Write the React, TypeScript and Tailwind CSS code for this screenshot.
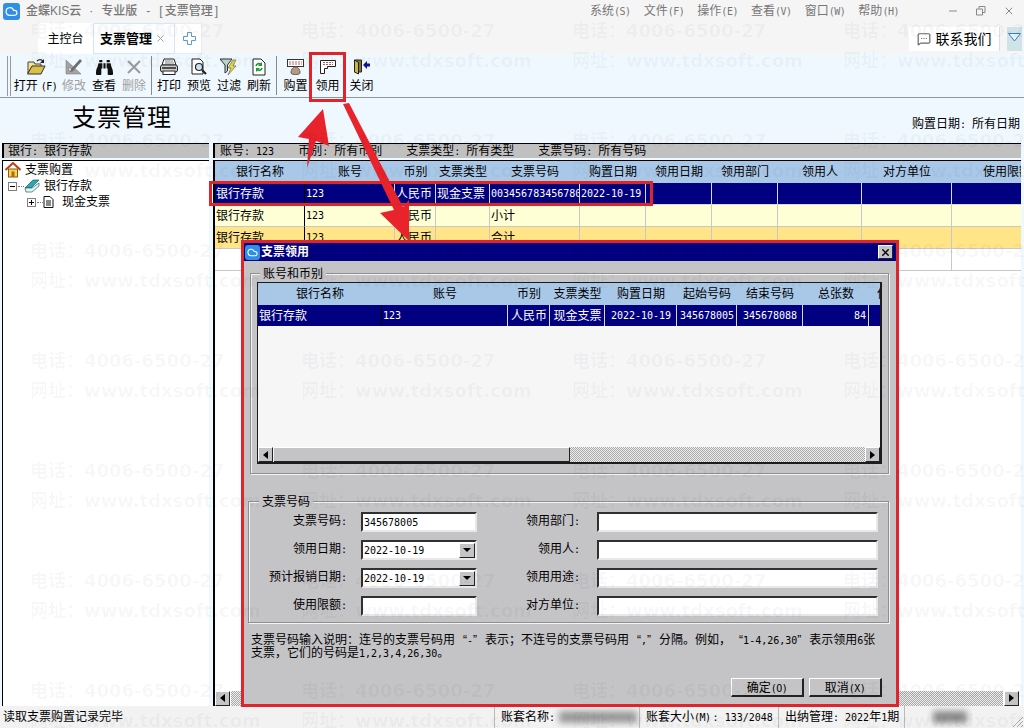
import { Cloud, MessageSquareMore, Minus, X } from 'lucide-react';
import { FaBinoculars } from 'react-icons/fa';
import type { ReactNode } from 'react';

const Num = ({ children }: { children: ReactNode }) => (
  <span className="font-['DejaVu_Sans_Mono',monospace] text-[10px]">{children}</span>
);

const Acc = ({ k }: { k: string }) => (
  <span className="font-['DejaVu_Sans_Mono',monospace] text-[10px] tracking-[-0.5px]">({k})</span>
);

// half width colon + space, like the old bitmap font
const Colon = () => <Num>:&nbsp;</Num>;

const QL = () => <span className="inline-block w-[12px] text-right">“</span>;
const QR = () => <span className="inline-block w-[12px] text-left">”</span>;

const AppIcon = ({ size }: { size: number }) => (
  <span className="flex shrink-0 items-center justify-center rounded-[3px] bg-[#2f8fe6]" style={{ width: size, height: size }}>
    <Cloud size={size - 4} color="#fff" strokeWidth={2.2} />
  </span>
);

const IconOpen = () => (
  <svg width="20" height="18" viewBox="0 0 20 18">
    <path d="M2 4h6l1 2h6v3H6L2 15z" fill="#f6e58a" stroke="#444" strokeWidth="1" />
    <path d="M6 8h13l-4 8H1.500z" fill="#d9c04a" stroke="#333" strokeWidth="1" />
    <path d="M11 3c2-2 4-2 6 0" fill="none" stroke="#222" strokeWidth="1.200" />
    <path d="M18 1v4h-4z" fill="#222" />
  </svg>
);
const IconEdit = () => (
  <svg width="20" height="18" viewBox="0 0 20 18">
    <path d="M2 2v14h15z M5 9v4h4z" fill="#a3a3a3" fillRule="evenodd" stroke="#7f7f7f" strokeWidth="0.600" />
    <path d="M7 11l9-10 2 2-9 10-3 1z" fill="#6e6e6e" />
  </svg>
);
const IconDelete = () => (
  <svg width="16" height="16" viewBox="0 0 16 16">
    <path d="M2 2l12 12M14 2L2 14" stroke="#9a9a9a" strokeWidth="2" />
  </svg>
);
const IconPrint = () => (
  <svg width="20" height="18" viewBox="0 0 20 18">
    <path d="M5 1h10l2 6H3z" fill="#fff" stroke="#222" />
    <path d="M6 3h8M6 5h9" stroke="#888" />
    <rect x="1.500" y="7" width="17" height="7" rx="2" fill="#cfcfcf" stroke="#222" />
    <rect x="4" y="13" width="12" height="3.500" fill="#fff" stroke="#222" />
    <path d="M3 10h14" stroke="#222" strokeWidth="1.500" />
  </svg>
);
const IconPreview = () => (
  <svg width="20" height="18" viewBox="0 0 20 18">
    <path d="M3 1h8l3 3v12H3z" fill="#fff" stroke="#222" />
    <circle cx="10" cy="9" r="3.500" fill="#cfe6f7" stroke="#222" strokeWidth="1.200" />
    <path d="M13 12l4 4" stroke="#222" strokeWidth="2.200" />
  </svg>
);
const IconFilter = () => (
  <svg width="20" height="18" viewBox="0 0 20 18">
    <path d="M1 1h12L8.500 7v6L6 15V7z" fill="#b7d4c8" stroke="#333" />
    <path d="M14 2l-5 8h3l-3 7 8-9h-3l3-6z" fill="#e9d83a" stroke="#555" strokeWidth="0.600" />
  </svg>
);
const IconRefresh = () => (
  <svg width="18" height="18" viewBox="0 0 18 18">
    <path d="M3 1h8l4 4v12H3z" fill="#fff" stroke="#222" />
    <path d="M6 8a3 3 0 0 1 5-1.500M12 10a3 3 0 0 1-5 1.500" fill="none" stroke="#1b9a2f" strokeWidth="1.600" />
    <path d="M12 4v4H8zM6 14v-4h4z" fill="#1b9a2f" />
  </svg>
);
const IconBuy = () => (
  <svg width="20" height="18" viewBox="0 0 20 18">
    <rect x="1.500" y="1.500" width="16" height="7" fill="#fff" stroke="#333" />
    <path d="M3 4h13M3 6h13" stroke="#c25a5a" strokeDasharray="2 1" />
    <path d="M5 15c0-4 2-6 4.500-6s4.500 2 4.500 6c0 2-9 2-9 0z" fill="#b49a86" stroke="#6b5a50" />
  </svg>
);
const IconTake = () => (
  <svg width="18" height="16" viewBox="0 0 18 16">
    <path d="M1.500 1.500h15v6h-8v2h-3v5h-4z" fill="#fff" stroke="#222" />
    <path d="M4 3.500h10M4 5.500h10" stroke="#b85c5c" strokeDasharray="2 1" />
  </svg>
);
const IconClose = () => (
  <svg width="18" height="16" viewBox="0 0 18 16">
    <path d="M1.500 1h7v12h-7z" fill="#8a7a2a" stroke="#222" />
    <path d="M1.500 1l4 2.500V15l-4-2z" fill="#c9b64a" stroke="#222" />
    <path d="M10 6l4-4v2.500h3v3h-3V10z" fill="#12129a" />
  </svg>
);

const IconHouse = () => (
  <svg width="16" height="16" viewBox="0 0 16 16">
    <rect x="3.500" y="7" width="9" height="8" fill="#f5d64a" stroke="#8a5a10" />
    <rect x="6.500" y="9.500" width="3" height="5.500" fill="#b5651d" />
    <path d="M0.500 8L8 1l7.500 7" fill="none" stroke="#b8431a" strokeWidth="2" />
  </svg>
);
const IconBank = () => (
  <svg width="16" height="14" viewBox="0 0 16 14">
    <path d="M1 9L9 1h6L7 9z" fill="#2fa7b0" stroke="#17616a" strokeWidth="0.700" />
    <path d="M1 9h7l7-5v3l-7 6H2z" fill="#e8f4f2" stroke="#17616a" strokeWidth="0.700" />
  </svg>
);
const IconPage = () => (
  <svg width="11" height="12" viewBox="0 0 11 12">
    <path d="M1 .5h6l3 3v8H1z" fill="#fff" stroke="#111" />
    <path d="M3 5h5M3 7h5M3 9h5" stroke="#111" />
  </svg>
);
const TreeBox = ({ open }: { open: boolean }) => (
  <span className="flex h-[9px] w-[9px] shrink-0 items-center justify-center border border-[#808080] bg-white">
    <span className="relative h-px w-[5px] bg-black">
      {!open && <span className="absolute left-[2px] top-[-2px] h-[5px] w-px bg-black" />}
    </span>
  </span>
);

const tools = [
  { label: <>打开<span className="ml-[3px]"><Acc k="F" /></span></>, icon: <IconOpen />, w: 'w-[47px]' },
  { label: '修改', icon: <IconEdit />, w: 'w-[30px]', off: true },
  { label: '查看', icon: <FaBinoculars size={17} color="#111" />, w: 'w-[30px]' },
  { label: '删除', icon: <IconDelete />, w: 'w-[30px]', off: true },
  { sep: true },
  { label: '打印', icon: <IconPrint />, w: 'w-[30px]' },
  { label: '预览', icon: <IconPreview />, w: 'w-[30px]' },
  { label: '过滤', icon: <IconFilter />, w: 'w-[30px]' },
  { label: '刷新', icon: <IconRefresh />, w: 'w-[30px]' },
  { sep: true },
  { label: '购置', icon: <IconBuy />, w: 'w-[33px]' },
  { label: '领用', icon: <IconTake />, w: 'w-[31px]' },
  { label: '关闭', icon: <IconClose />, w: 'w-[35px] ml-[1px]' },
];

const menus = [
  ['系统', 'S'],
  ['文件', 'F'],
  ['操作', 'E'],
  ['查看', 'V'],
  ['窗口', 'W'],
  ['帮助', 'H'],
];

const mainHead = ['银行名称', '账号', '币别', '支票类型', '支票号码', '购置日期', '领用日期', '领用部门', '领用人', '对方单位', '使用限额'];
const mainCols = 'grid grid-cols-[90px_90px_41px_54px_90px_66px_66px_66px_84px_90px_110px]';

const mainRows = [
  { bg: 'bg-[#000080] text-white', line: 'border-[#d8d8d8]', cells: ['银行存款', '123', '人民币', '现金支票', '003456783456780', '2022-10-19', '', '', '', '', ''] },
  { bg: 'bg-[#ffffd6]', line: 'border-[#c8c8c8]', cells: ['银行存款', '123', '人民币', '', '小计', '', '', '', '', '', ''] },
  { bg: 'bg-[#ffe488]', line: 'border-[#c8c8c8]', cells: ['银行存款', '123', '人民币', '', '合计', '', '', '', '', '', ''] },
  { bg: 'bg-white', line: 'border-[#c8c8c8]', cells: ['', '', '', '', '', '', '', '', '', '', ''] },
];

const isNum = (s: string) => /^[\d-]+$/.test(s);

const dlgHead = ['银行名称', '账号', '币别', '支票类型', '购置日期', '起始号码', '结束号码', '总张数', '使用'];
const dlgCols = 'grid grid-cols-[124px_126px_42px_55px_72px_60px_66px_66px_40px]';
const dlgRow = ['银行存款', '123', '人民币', '现金支票', '2022-10-19', '345678005', '345678088', '84', ''];

const dither = 'bg-[repeating-conic-gradient(#a8a8a8_0_25%,#eeeeee_0_50%)] bg-[length:2px_2px]';
const raised = 'border border-t-white border-l-white border-r-[#222] border-b-[#222] bg-[#c4c3c6]';
const sunken = 'border-2 border-t-[#303030] border-l-[#303030] border-r-[#e8e8e8] border-b-[#e8e8e8] bg-white';

const ScrollBtn = ({ right }: { right?: boolean }) => (
  <span className={`flex h-[15px] w-[15px] shrink-0 items-center justify-center ${raised}`}>
    <svg width="5" height="8" viewBox="0 0 5 8">
      <path d={right ? 'M0 0l5 4-5 4z' : 'M5 0L0 4l5 4z'} fill="#000" />
    </svg>
  </span>
);

const Field = ({ label, value, date }: { label: string; value?: string; date?: boolean }) => (
  <>
    <span className="h-[20px] overflow-hidden text-right leading-[18px]">{label}<Num>:</Num></span>
    <span className={`flex h-[20px] items-center pl-[1px] ${sunken}`}>
      {value && <Num>{value}</Num>}
      {date && (
        <span className={`ml-auto flex h-[15px] w-[16px] items-center justify-center ${raised}`}>
          <svg width="8" height="4" viewBox="0 0 8 4"><path d="M0 0h8L4 4z" fill="#000" /></svg>
        </span>
      )}
    </span>
  </>
);

const Group = ({ title, className, legend, children }: { title: string; className: string; legend: string; children: ReactNode }) => (
  <div className={`relative border border-[#8e8e8e] shadow-[inset_1px_1px_0_#f4f4f4,1px_1px_0_#f4f4f4] ${className}`}>
    <span className={`absolute top-[-8px] bg-[#c4c3c6] px-[3px] text-[12px] leading-[16px] ${legend}`}>{title}</span>
    {children}
  </div>
);

export default function App() {
  return (
    <div className="relative flex h-[728px] w-[1024px] flex-col overflow-hidden bg-[#f0f8ff] font-['Liberation_Sans','Noto_Sans_CJK_SC',sans-serif] text-[12px] text-black">
      {/* title bar */}
      <div className="flex h-[22px] shrink-0 items-center bg-[#f5f5f5] pl-[3px] text-[#777]">
        <AppIcon size={17} />
        <span className="ml-[6px] whitespace-nowrap font-medium">
          金蝶KIS云<span className="mx-[8px]">·</span>专业版<span className="mx-[9px]">-</span>[<span className="mx-[2px]">支票管理</span>]
        </span>
        <div className="ml-auto flex w-[322px]">
          {menus.map(([name, key]) => (
            <span key={key} className="w-[56px] whitespace-nowrap">{name}<Acc k={key} /></span>
          ))}
        </div>
        <div className="flex w-[112px] items-center gap-[16px] pl-[35px] text-[#888]">
          <Minus size={12} />
          <span className="flex w-[12px] justify-center">
            <svg width="10" height="10" viewBox="0 0 10 10"><path d="M3 2.500V.500h6v6H7M.500 3h6v6h-6z" fill="none" stroke="#888" /></svg>
          </span>
          <X size={12} />
        </div>
      </div>

      {/* tabs */}
      <div className="flex h-[32px] shrink-0 items-end bg-[#f5f5f5] pl-[38px]">
        <div className="flex h-[31px] w-[55px] items-center justify-center bg-white">主控台</div>
        <div className="flex h-[31px] w-[82px] items-center border border-[#d6e6f4] bg-[#fbfdff] pl-[6px] text-[13px] font-bold">
          支票管理
          <X size={11} className="ml-[3px] text-[#999]" />
        </div>
        <div className="flex h-[31px] w-[27px] items-center justify-center border border-l-0 border-[#e6eef5] bg-white pl-[3px]">
          <svg width="13" height="13" viewBox="0 0 13 13">
            <path d="M4.500.500h4v4h4v4h-4v4h-4v-4h-4v-4h4z" fill="#fff" stroke="#5b9bd5" />
          </svg>
        </div>
        <div className="ml-auto mb-[3px] flex h-[24px] w-[91px] items-center justify-center gap-[5px] border-r border-[#ddd] bg-white text-[14px]">
          <MessageSquareMore size={14} className="text-[#666]" />
          联系我们
        </div>
        <div className="mb-[3px] ml-[7px] mr-[2px] flex h-[24px] w-[15px] items-center justify-center bg-[#cfe3e8] pb-[4px]">
          <svg width="13" height="9" viewBox="0 0 13 9">
            <path d="M.500.500h12l-6 7.500z" fill="#e6f3f6" stroke="#3a7fb5" />
          </svg>
        </div>
      </div>

      {/* toolbar */}
      <div className="flex h-[44px] shrink-0 items-center border-b border-[#8f9499] pl-[7px]">
        <div className="mr-[1px] h-[40px] w-[4px] border-x border-[#999]" />
        {tools.map((t, i) =>
          t.sep ? (
            <div key={i} className="mx-[2px] h-[39px] w-px shrink-0 bg-[#8a8a8a]" />
          ) : (
            <div key={i} className={`flex shrink-0 flex-col items-center ${t.w} ${t.off ? 'text-[#a0a0a0]' : ''}`}>
              <span className="flex h-[20px] items-center">{t.icon}</span>
              <span className="mt-[1px] whitespace-nowrap leading-[16px]">{t.label}</span>
            </div>
          ),
        )}
      </div>

      {/* report heading */}
      <div className="flex h-[45px] shrink-0 items-start pl-[72px] pr-[4px]">
        <h1 className="mt-[3px] text-[24px] font-normal leading-[34px] tracking-[1px]">支票管理</h1>
        <span className="ml-auto mt-[18px] leading-[16px]">购置日期<Colon />所有日期</span>
      </div>

      {/* body */}
      <div className="flex min-h-0 flex-1 pl-[2px] pr-[3px]">
        <div className="flex w-[207px] shrink-0 flex-col">
          <div className="h-[15px] border-l-2 border-t border-black bg-[#c0c0c0] pl-[4px] leading-[14px]">银行<Colon />银行存款</div>
          <div className="mt-[2px] min-h-0 flex-1 border-l border-t border-black bg-white pt-[1px]">
            <div className="flex h-[16px] items-center gap-[4px] pl-[2px]"><IconHouse />支票购置</div>
            <div className="flex h-[16px] items-center pl-[5px]">
              <TreeBox open />
              <span className="ml-[1px] w-[6px] border-t border-dotted border-[#777]" />
              <IconBank />
              <span className="ml-[4px]">银行存款</span>
            </div>
            <div className="flex h-[16px] items-center pl-[24px]">
              <TreeBox open={false} />
              <span className="ml-[1px] w-[6px] border-t border-dotted border-[#777]" />
              <IconPage />
              <span className="ml-[8px]">现金支票</span>
            </div>
          </div>
        </div>

        <div className="ml-[4px] flex min-w-0 flex-1 flex-col">
          <div className="flex h-[15px] gap-[24px] border-l-2 border-t border-black bg-[#c0c0c0] pl-[5px] leading-[14px]">
            <span>账号<Colon /><Num>123</Num></span>
            <span>币别<Colon />所有币别</span>
            <span>支票类型<Colon />所有类型</span>
            <span>支票号码<Colon />所有号码</span>
          </div>
          <div className="mt-[2px] flex min-h-0 flex-1 flex-col overflow-hidden border-l-2 border-t border-black bg-white">
            <div className={`${mainCols} h-[22px] items-center bg-[#a9c8e8] text-center`}>
              {mainHead.map((h) => <span key={h}>{h}</span>)}
            </div>
            {mainRows.map((r, ri) => (
              <div key={ri} className={`${mainCols} h-[22px] ${r.bg}`}>
                {r.cells.map((c, ci) => (
                  <span
                    key={ci}
                    className={`flex items-center overflow-hidden whitespace-nowrap border-b pl-[1px] ${r.line} ${ci === 0 ? 'border-r border-r-black' : 'border-r'}`}
                  >
                    {isNum(c) ? <Num>{c}</Num> : c}
                  </span>
                ))}
              </div>
            ))}
            <div className="mt-auto flex h-[16px] shrink-0 items-center justify-between pr-[2px]">
              <ScrollBtn />
              <span className={`mx-[1px] h-[15px] flex-1 ${dither}`} />
              <ScrollBtn right />
            </div>
          </div>
        </div>
      </div>

      {/* status bar */}
      <div className="flex h-[22px] shrink-0 items-center bg-[#f2f2f2]">
        <span className="w-[494px] shrink-0 pl-[3px]">读取支票购置记录完毕</span>
        <span className="flex h-full w-[145px] shrink-0 items-center border-l border-[#bbb] pl-[6px]">
          账套名称<Num>:</Num>
          <span className="ml-[4px] h-[12px] w-[78px] bg-[#9a9a9a] blur-[3px]" />
        </span>
        <span className="flex h-full w-[139px] shrink-0 items-center whitespace-pre border-l border-[#bbb] pl-[6px]">
          账套大小<Acc k="M" /><span className="ml-[2px]"><Colon /></span><Num>133/2048</Num>
        </span>
        <span className="flex h-full w-[127px] shrink-0 items-center whitespace-pre border-x border-[#bbb] pl-[6px]">
          出纳管理<Colon /><Num>2022</Num>年<Num>1</Num>期
        </span>
        <span className="ml-[28px] h-[12px] w-[34px] bg-[#8a8a8a] blur-[3px]" />
        <svg className="ml-auto self-end" width="13" height="13" viewBox="0 0 13 13">
          <path d="M12 2L2 12M12 6l-6 6M12 10l-2 2" stroke="#a8a8a8" />
        </svg>
      </div>

      {/* annotation arrows */}
      <svg className="absolute left-0 top-0" width="1024" height="728" viewBox="0 0 1024 728">
        <path d="M323 109l6 37-13-5-9 27 2-29-11-2z" fill="#e8232b" />
        <path d="M343 104l6-1 54 104 6-7v41l-29-28 14-3z" fill="#e8232b" />
      </svg>
      <div className="absolute left-[309px] top-[52px] h-[50px] w-[37px] border-[3px] border-[#e0242c]" />
      <div className="absolute left-[209px] top-[181px] h-[25px] w-[444px] border-[3px] border-[#e0242c]" />

      {/* dialog */}
      <div className="absolute left-[241px] top-[240px] flex h-[467px] w-[658px] flex-col border-[3px] border-[#e0242c] bg-[#c4c3c6]">
        <div className="flex h-[18px] shrink-0 items-center bg-[#000080] pl-[1px] pr-[3px] font-bold text-white">
          <AppIcon size={15} />
          <span className="ml-[1px]">支票领用</span>
          <span className={`ml-auto flex h-[14px] w-[15px] items-center justify-center text-black ${raised}`}>
            <X size={11} strokeWidth={3} />
          </span>
        </div>

        <Group title="账号和币别" legend="left-[9px]" className="ml-[6px] mr-[7px] mt-[12px] h-[201px] px-[6px] pt-[8px]">
          <div className="flex h-[182px] flex-col overflow-hidden border border-b-2 border-r-2 border-[#1c1c1c] bg-[#f6f6f6]">
            <div className={`${dlgCols} h-[22px] shrink-0 items-center whitespace-nowrap bg-[#a9c8e8] text-center`}>
              {dlgHead.map((h) => <span key={h}>{h}</span>)}
            </div>
            <div className={`${dlgCols} h-[21px] shrink-0 bg-[#000080] text-white`}>
              {dlgRow.map((c, i) => (
                <span
                  key={i}
                  className={`flex items-center whitespace-nowrap border-r border-[#d8d8d8] pl-[1px] ${i === 0 ? 'border-r-black' : ''} ${i >= 2 && i <= 6 ? 'justify-center' : ''} ${i === 7 ? 'justify-end pr-[2px]' : ''}`}
                >
                  {isNum(c) ? <Num>{c}</Num> : c}
                </span>
              ))}
            </div>
            <div className="mt-auto flex h-[15px] shrink-0">
              <ScrollBtn />
              <span className="ml-[1px] h-[15px] w-[296px] border-b border-r border-t border-b-[#222] border-r-[#222] border-t-white bg-[#c4c3c6]" />
              <span className={`h-[15px] flex-1 ${dither}`} />
              <ScrollBtn right />
            </div>
          </div>
        </Group>

        <Group title="支票号码" legend="left-[10px]" className="ml-[4px] mr-[7px] mt-[27px] h-[122px]">
          <div className="grid auto-rows-[20px] grid-cols-[98px_130px_103px_298px] gap-y-[8px] pt-[10px] [&>*:nth-child(4n+2)]:ml-[14px] [&>*:nth-child(4n+2)]:w-[116px] [&>*:nth-child(4n)]:ml-[17px] [&>*:nth-child(4n)]:w-[281px]">
            <Field label="支票号码" value="345678005" />
            <Field label="领用部门" />
            <Field label="领用日期" value="2022-10-19" date />
            <Field label="领用人" />
            <Field label="预计报销日期" value="2022-10-19" date />
            <Field label="领用用途" />
            <Field label="使用限额" />
            <Field label="对方单位" />
          </div>
        </Group>

        <p className="ml-[7px] mt-[11px] whitespace-nowrap text-[12px] leading-[12px]">
          支票号码输入说明：连号的支票号码用<QL /><Num>-</Num><QR />表示；不连号的支票号码用<QL /><Num>,</Num><QR />分隔。例如，<QL /><Num>1-4,26,30</Num><QR />表示领用<Num>6</Num>张
          <br />
          支票，它们的号码是<Num>1,2,3,4,26,30</Num>。
        </p>

        <div className="mb-[7px] mr-[14px] mt-auto flex justify-end gap-[5px]">
          <button className={`h-[19px] w-[73px] border-b-2 border-r-2 ${raised}`}>确定<Acc k="O" /></button>
          <button className={`h-[19px] w-[73px] border-b-2 border-r-2 ${raised}`}>取消<Acc k="X" /></button>
        </div>
      </div>

      {/* watermark */}
      <div className="pointer-events-none absolute inset-0 grid auto-rows-[110px] grid-cols-[repeat(4,271px)] pl-[30px] pt-[16px] font-['DejaVu_Sans','Noto_Sans_CJK_SC',sans-serif] text-[18px] font-bold text-black/[.04]">
        {Array.from({ length: 28 }).map((_, i) => (
          <div key={i} className="whitespace-nowrap leading-[30px]">
            <div>电话：4006-6500-27</div>
            <div>网址：www.tdxsoft.com</div>
          </div>
        ))}
      </div>
    </div>
  );
}
